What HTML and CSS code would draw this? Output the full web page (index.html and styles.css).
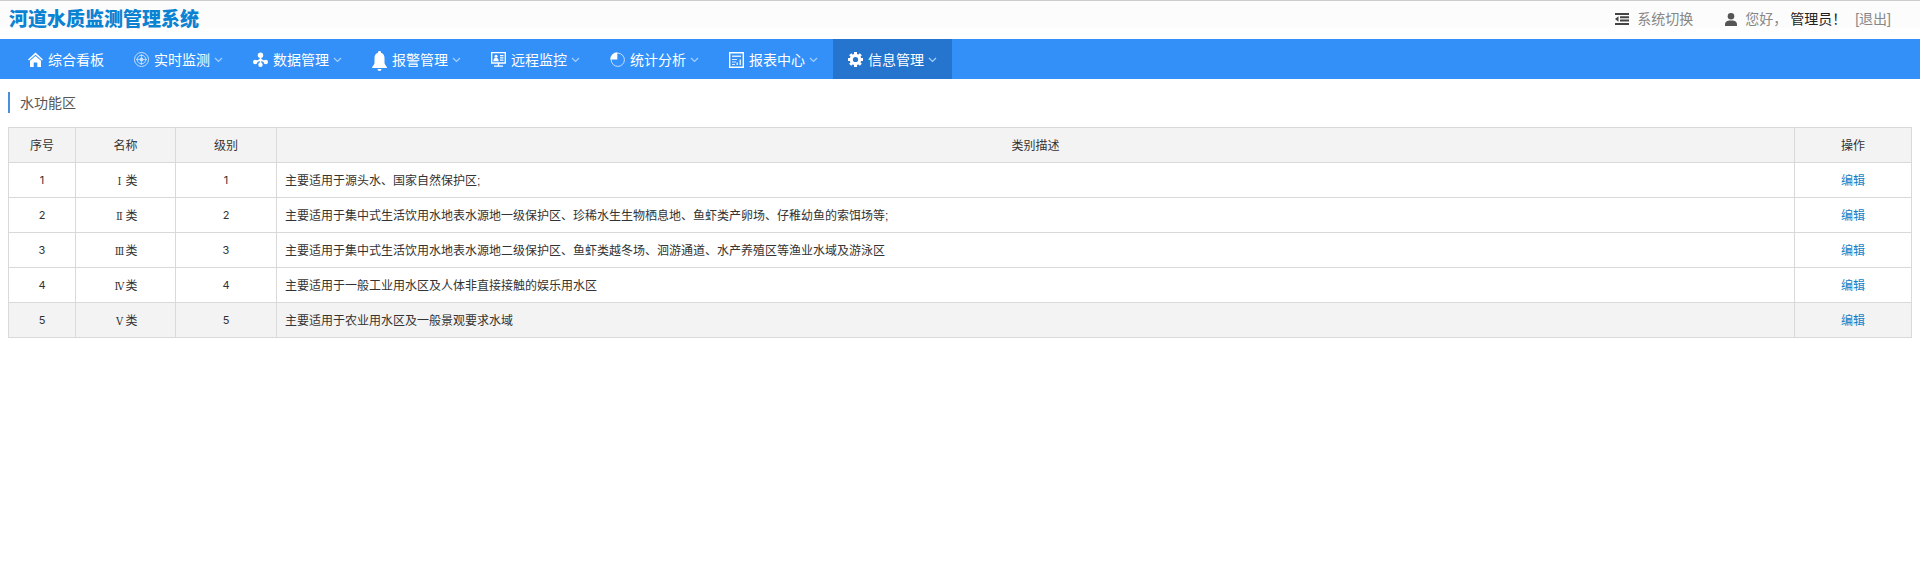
FILE: index.html
```html
<!DOCTYPE html>
<html lang="zh-CN">
<head>
<meta charset="utf-8">
<title>河道水质监测管理系统</title>
<link rel="stylesheet" href="styles.css">
</head>
<body>
<svg width="0" height="0" class="defs"><symbol id="chev" viewBox="0 0 9 6"><path d="M1 1l3.5 3.5L8 1" fill="none" stroke="currentColor" stroke-width="1.2"/></symbol></svg>
<header class="top">
  <h1 class="brand">河道水质监测管理系统</h1>
  <div class="tools">
    <a class="switch"><svg width="14" height="12" viewBox="0 0 14 12"><path d="M0 0h14v2H0zM5 3.3h9v2H5zM5 6.6h9v2H5zM0 10h14v2H0zM0 6l3.5-2.7v5.4z" fill="#444"/></svg>系统切换</a>
    <span class="user"><svg width="12" height="13" viewBox="0 0 12 13"><circle cx="6" cy="3.3" r="3.3" fill="#555"/><path d="M0 13v-1.500C0 9 1.500 8 4 7.500h4c2.500.5 4 1.500 4 4V13z" fill="#555"/></svg>您好，<b class="name">管理员！</b></span>
    <a class="logout">[退出]</a>
  </div>
</header>
<nav class="nav">
  <a class="item"><svg class="ico" viewBox="0 0 15 15"><path d="M0 7.500L7.500.5 15 7.500l-1 1L7.500 2.800 1 8.500z" fill="#fff"/><path d="M2 8.800l5.500-4.700L13 8.800V15H9.300v-4.500H5.700V15H2z" fill="#fff"/></svg><span>综合看板</span></a>
  <a class="item"><svg class="ico" viewBox="0 0 15 15"><g fill="none" stroke="#c4e0ff"><circle cx="7.500" cy="7.500" r="7"/><circle cx="7.500" cy="7.500" r="4.300"/><path d="M7.500 2v11M2 7.500h11" stroke-width=".8"/></g><circle cx="7.500" cy="7.500" r="2" fill="#c4e0ff"/></svg><span>实时监测</span><svg class="chev"><use href="#chev"/></svg></a>
  <a class="item"><svg class="ico" viewBox="0 0 15 15"><path d="M7.500 3v4.500L3 10M7.500 7.500L12 10M7.500 7.500V12" stroke="#fff" stroke-width="1.600" fill="none"/><g fill="#fff"><circle cx="7.500" cy="3.300" r="2.700"/><circle cx="2.200" cy="10" r="2.200"/><circle cx="12.800" cy="10" r="2.200"/><circle cx="7.500" cy="12.700" r="2.200"/></g></svg><span>数据管理</span><svg class="chev"><use href="#chev"/></svg></a>
  <a class="item"><svg class="ico bell" viewBox="0 0 15 20"><path d="M7.500 0a1.500 1.500 0 011.500 1.700C11.500 2.500 12.500 4.500 12.500 7v5c0 1.500 2.500 3.500 2.500 5H0c0-1.500 2.500-3.500 2.500-5V7c0-2.500 1-4.500 3.500-5.300A1.500 1.500 0 017.500 0zM5.500 18h4c0 1-1 2-2 2s-2-1-2-2z" fill="#fff"/></svg><span>报警管理</span><svg class="chev"><use href="#chev"/></svg></a>
  <a class="item"><svg class="ico" viewBox="0 0 15 15"><path d="M.7.700h13.600v10.300H.7zM7.500 11v3M3 14.200h9" fill="none" stroke="#fff" stroke-width="1.300"/><circle cx="5" cy="4.200" r="1.500" fill="#fff"/><path d="M2.300 9.200c0-4.500 5.400-4.500 5.400 0zM9 3h3.500v1.200H9zM9 5.200h3.500v1.200H9zM9 7.500h3.500v1.200H9z" fill="#fff"/></svg><span>远程监控</span><svg class="chev"><use href="#chev"/></svg></a>
  <a class="item"><svg class="ico" viewBox="0 0 15 15"><circle cx="7.800" cy="7.800" r="6.600" fill="none" stroke="#c4e0ff"/><path d="M7.300 7.600H.3A7 7 0 017.300.3z" fill="#fff"/></svg><span>统计分析</span><svg class="chev"><use href="#chev"/></svg></a>
  <a class="item"><svg class="ico report" viewBox="0 0 15 16"><path d="M.7.700h13.600v14.600H.7z" fill="none" stroke="#fff" stroke-width="1.400"/><path d="M3 3.500h9v1.500H3zM3 7h5v1H3zM3 9.500h4v1H3zM3 12h3v1H3zM7.500 10.500H9V13H7.500zM10.500 7.500H12V13h-1.500z" fill="#d8eaff"/></svg><span>报表中心</span><svg class="chev"><use href="#chev"/></svg></a>
  <a class="item active"><svg class="ico" viewBox="0 0 15 15"><circle cx="7.500" cy="7.500" r="4.200" fill="none" stroke="#fff" stroke-width="3.200"/><path d="M7.500 0v3M7.500 12v3M0 7.500h3M12 7.500h3M2.200 2.200l2 2M10.800 10.800l2 2M12.800 2.200l-2 2M4.200 10.800l-2 2" stroke="#fff" stroke-width="3"/></svg><span>信息管理</span><svg class="chev"><use href="#chev"/></svg></a>
</nav>
<main class="main">
  <h2 class="heading">水功能区</h2>
  <table class="grid">
    <colgroup><col class="c-no"><col class="c-name"><col class="c-level"><col><col class="c-op"></colgroup>
    <thead><tr><th>序号</th><th>名称</th><th>级别</th><th>类别描述</th><th>操作</th></tr></thead>
    <tbody>
      <tr><td class="num">1</td><td><span class="roman">Ⅰ</span>类</td><td class="num">1</td><td class="desc">主要适用于源头水、国家自然保护区;</td><td><a class="edit">编辑</a></td></tr>
      <tr><td class="num">2</td><td><span class="roman">Ⅱ</span>类</td><td class="num">2</td><td class="desc">主要适用于集中式生活饮用水地表水源地一级保护区、珍稀水生生物栖息地、鱼虾类产卵场、仔稚幼鱼的索饵场等;</td><td><a class="edit">编辑</a></td></tr>
      <tr><td class="num">3</td><td><span class="roman">Ⅲ</span>类</td><td class="num">3</td><td class="desc">主要适用于集中式生活饮用水地表水源地二级保护区、鱼虾类越冬场、洄游通道、水产养殖区等渔业水域及游泳区</td><td><a class="edit">编辑</a></td></tr>
      <tr><td class="num">4</td><td><span class="roman">Ⅳ</span>类</td><td class="num">4</td><td class="desc">主要适用于一般工业用水区及人体非直接接触的娱乐用水区</td><td><a class="edit">编辑</a></td></tr>
      <tr class="hover"><td class="num">5</td><td><span class="roman">Ⅴ</span>类</td><td class="num">5</td><td class="desc">主要适用于农业用水区及一般景观要求水域</td><td><a class="edit">编辑</a></td></tr>
    </tbody>
  </table>
</main>
</body>
</html>
```
FILE: styles.css
```css
* { box-sizing: border-box; }
body { margin: 0; background: #fff; color: #333; font: 12px "Liberation Sans", "Noto Sans CJK SC", sans-serif; }
.defs { display: block; }
.top { height: 39px; border-top: 1px solid #ccc; background: linear-gradient(#fcfcfc 27px, #fff 27px); display: flex; justify-content: space-between; padding: 0 29px 0 9px; }
.brand { margin: 0; font: 900 19px/33px "Noto Sans CJK SC", sans-serif; color: #0c82d2; }
.tools { display: flex; font-size: 14px; line-height: 36px; height: 36px; color: #888; }
.switch, .user { display: flex; align-items: center; }
.switch svg { margin-right: 8px; }
.user { margin-left: 32px; }
.user svg { margin-right: 8px; }
.name { font-weight: 400; color: #222; margin-left: 3px; }
.logout { margin-left: 9px; }
.nav { height: 40px; background: #3390f9; display: flex; padding-left: 13px; color: #fff; font-size: 14px; line-height: 40px; }
.item { display: flex; align-items: center; padding: 0 15px; }
.item span { padding-top: 2px; line-height: 38px; }
.item.active { background: #2575cf; }
.ico { width: 15px; height: 15px; margin-right: 5px; margin-top: 1px; }
.bell { height: 20px; margin-top: 3px; }
.report { height: 16px; }
.chev { width: 9px; height: 6px; margin-left: 4px; margin-top: 2px; color: #a9d1ff; }
.main { padding: 13px 8px 0; }
.heading { margin: 0 0 14px; height: 21px; border-left: 2px solid #4a90dc; padding-left: 10px; font-size: 14px; line-height: 23px; font-weight: 400; color: #555; }
.grid { width: 1904px; table-layout: fixed; border-collapse: collapse; }
.grid th, .grid td { height: 35px; border: 1px solid #d9d9d9; padding: 2px 0 0; text-align: center; font-weight: 400; line-height: 20px; }
.grid th, .hover td { background: #f3f3f3; }
.grid td.desc { text-align: left; padding-left: 8px; }
.grid td.num { font-family: Inter, sans-serif; font-size: 11px; padding-top: 0; }
.roman { display: inline-flex; justify-content: center; width: 12px; font-family: "DejaVu Serif Condensed", "DejaVu Serif", serif; font-size: 11px; line-height: 14px; }
.c-no { width: 67px; }
.c-name { width: 100px; }
.c-level { width: 101px; }
.c-op { width: 117px; }
.edit { color: #0f82c8; }
```
